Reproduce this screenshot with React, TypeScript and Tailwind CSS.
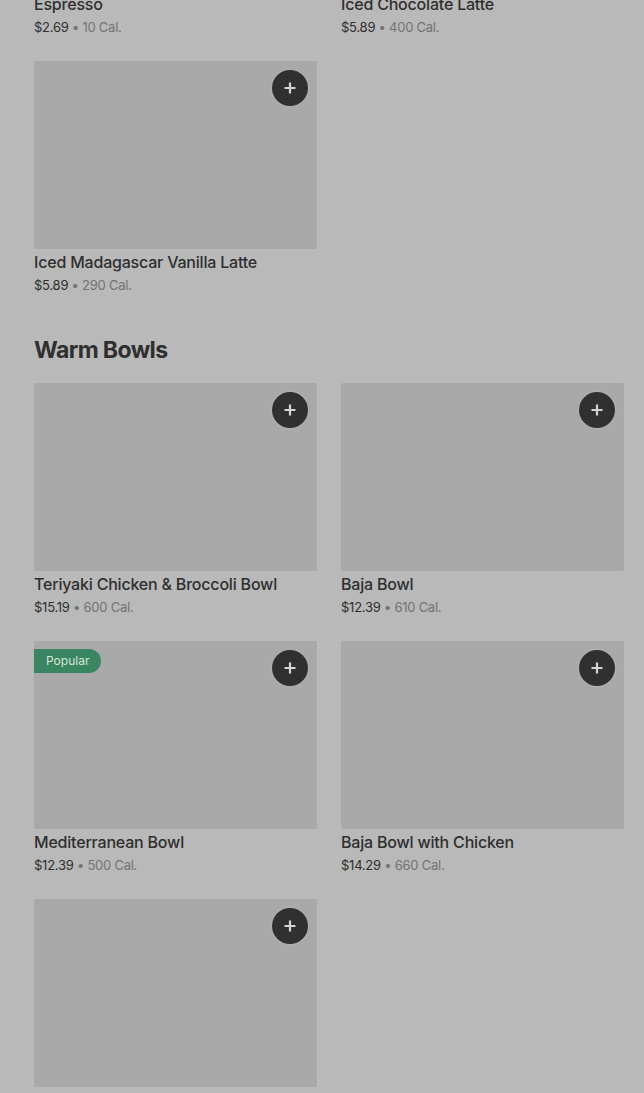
import React from 'react';

type Item = {
  name: string;
  price: string;
  cal: string;
  popular?: boolean;
};

const coffee: Item[] = [
  { name: 'Espresso', price: '$2.69', cal: '10 Cal.' },
  { name: 'Iced Chocolate Latte', price: '$5.89', cal: '400 Cal.' },
  { name: 'Iced Madagascar Vanilla Latte', price: '$5.89', cal: '290 Cal.' },
];

const bowls: Item[] = [
  { name: 'Teriyaki Chicken & Broccoli Bowl', price: '$15.19', cal: '600 Cal.' },
  { name: 'Baja Bowl', price: '$12.39', cal: '610 Cal.' },
  { name: 'Mediterranean Bowl', price: '$12.39', cal: '500 Cal.', popular: true },
  { name: 'Baja Bowl with Chicken', price: '$14.29', cal: '660 Cal.' },
  { name: 'Mediterranean Bowl with Chicken', price: '$14.29', cal: '620 Cal.' },
];

function PlusButton() {
  return (
    <button className="absolute right-[9px] top-[9px] flex h-9 w-9 items-center justify-center rounded-full bg-[#303030] shadow-[0_0_2px_rgba(255,255,255,0.3)]">
      <svg width="14" height="14" viewBox="0 0 14 14" fill="none">
        <path d="M7 1.5v11M1.5 7h11" stroke="#d4d4d4" strokeWidth="2.2" />
      </svg>
    </button>
  );
}

function ItemCard({ item }: { item: Item }) {
  return (
    <div className="flex flex-col">
      <div className="relative h-[188px] bg-[#a9a9a9] rounded-[2px]">
        {item.popular && (
          <div className="absolute left-0 top-2 flex h-[24px] items-center rounded-r-full bg-[#3a8662] pl-3 pr-3 text-[12px] text-[#d6e4dc]">
            Popular
          </div>
        )}
        <PlusButton />
      </div>
      <div className="mt-[3px] text-[16px] font-medium leading-5 tracking-[-0.2px] text-[#2f2f2f] truncate">
        {item.name}
      </div>
      <div className="mt-[3px] text-[13px] leading-5 tracking-[-0.25px] text-[#2f2f2f]">
        {item.price}
        <span className="text-[#737373]"> • {item.cal}</span>
      </div>
    </div>
  );
}

function App() {
  return (
    <div
      className="h-[1093px] overflow-hidden bg-[#b9b9b9]"
      style={{ fontFamily: 'Inter, "Noto Sans", sans-serif' }}
    >
      <div className="-mt-[197px] pl-[34px] pr-[20px]">
        {/* Coffee section (scrolled) */}
        <div className="grid grid-cols-2 gap-x-6 gap-y-6">
          {coffee.map(item => (
            <ItemCard key={item.name} item={item} />
          ))}
        </div>

        {/* Warm Bowls */}
        <h2 className="mt-[39px] mb-[17px] text-[23px] font-bold leading-8 tracking-[-0.6px] text-[#2f2f2f]">
          Warm Bowls
        </h2>
        <div className="grid grid-cols-2 gap-x-6 gap-y-6">
          {bowls.map(item => (
            <ItemCard key={item.name} item={item} />
          ))}
        </div>
      </div>
    </div>
  );
}

export default App;
